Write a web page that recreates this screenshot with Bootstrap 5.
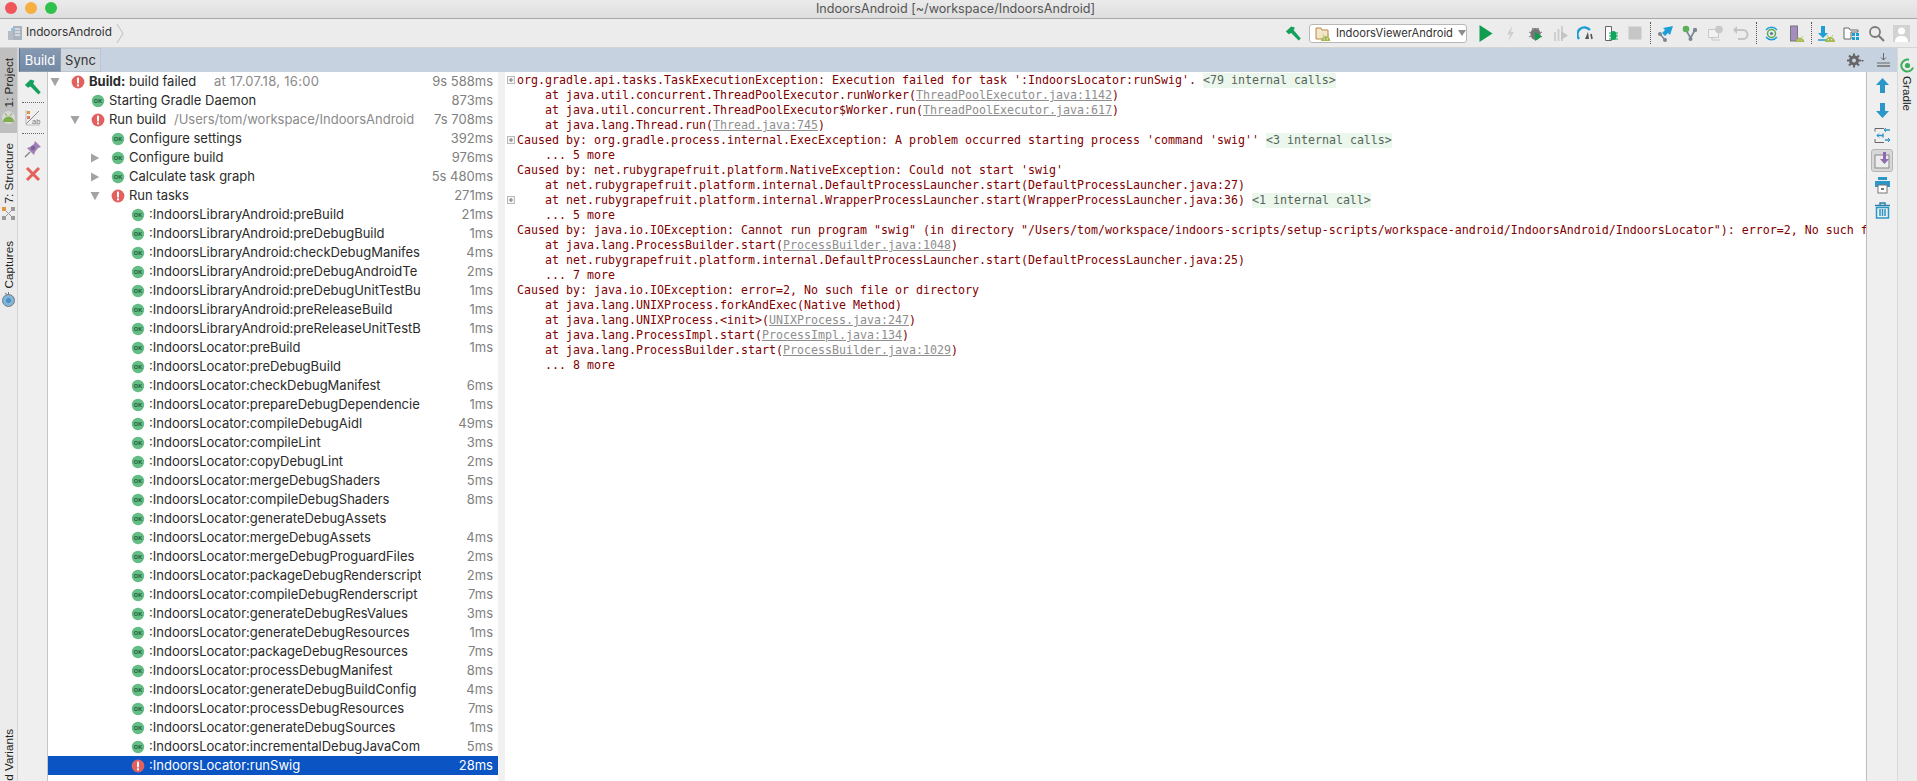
<!DOCTYPE html>
<html lang="en">
<head>
<meta charset="utf-8">
<title>IndoorsAndroid</title>
<link href="https://cdn.jsdelivr.net/npm/bootstrap@5.3.0/dist/css/bootstrap.min.css" rel="stylesheet">
<style>
html,body{height:781px;overflow:hidden;background:#ececec}
body{font-family:Inter,"Liberation Sans",sans-serif;font-size:13px;color:#2b2b2b}
.ide{height:781px;width:1917px}
.titlebar{height:19px;background:linear-gradient(#ebebeb,#dedede);border-bottom:1px solid #a8a8a8;color:#555;font-size:12.6px;line-height:18px;padding-right:6px;flex:none}
.lights{left:5px;top:2px}
.lightdot{width:12px;height:12px;border-radius:50%;display:block}
.toolbar{height:29px;background:#ececec;border-bottom:1px solid #d4d4d4;padding-right:3px}
.crumb{padding-left:7px;gap:2px;font-size:11.8px;color:#333}
.crumb-sep{width:8px;height:21px;margin-left:2px}
.tb{width:25px;height:22px;flex:none}
.tb svg{width:17px;height:17px}
.tb-sep{width:0;height:22px;border-left:1px dotted #555;margin:0 2px 0 2.5px;flex:none}
.combo{width:158px;height:19px;background:#fff;border:1px solid #b8b8b8;border-radius:3px;font-size:11.2px;color:#333;margin:0 5.5px 0 3.5px;padding:0 5px;gap:5px}
.combo svg.fld{width:16px;height:15px;flex:none}
.workspace{min-height:0}
.lstripe{width:18px;background:#ececec;font-family:"Liberation Sans",sans-serif;font-size:11.7px;color:#222;border-right:1px solid #d4d4d4;flex:none}
.rstripe{width:20px;background:#ececec;font-family:"Liberation Sans",sans-serif;font-size:11.7px;color:#222;border-left:1px solid #d8d8d8;flex:none;padding-top:10px}
.vt{writing-mode:vertical-rl;transform:rotate(180deg);line-height:17px;white-space:nowrap}
.vdown{writing-mode:vertical-rl;line-height:17px;white-space:nowrap;margin-top:3px}
.st1{height:85px;background:#bfbfbf;padding-top:10px;gap:3px}
.st2{padding-top:10px;gap:3px}
.st3{padding-top:20px;gap:3px}
.st svg,.rstripe svg{width:15px;height:15px;flex:none}
.st4{margin-top:auto}
.tabstrip{height:24px;background:#c6d2df;padding-left:1px}
.tabx{height:24px;font-size:13px;line-height:23px;text-align:center;border:1px solid #8f9db0;border-width:1px 1px 1px 0}
.tabon{width:42px;background:linear-gradient(#8599b2,#7489a4);color:#fff;border-left:1px solid #5f7186}
.taboff{width:40px;background:#cfd6de;color:#333;border-color:#bcc6d2}
.stripico{width:28px;height:24px}
.stripico svg{width:17px;height:17px}
.panel{min-height:0}
.tools{width:30px;background:#efefef;border-right:1px solid #c4c4c4;padding-top:2px;flex:none}
.tool{width:100%;height:25px}
.tool svg{width:18px;height:18px}
.tooldiv{width:22px;border-top:1px dotted #666;margin:3px 0 2px}
.tree{width:450px;background:#fff;flex:none}
.trow{height:19px;line-height:19px;padding-right:5px;white-space:nowrap}
.l0{padding-left:0}.l1{padding-left:20px}.l2{padding-left:40px}.l3{padding-left:60px}
.arr{width:14px;height:19px;flex:none;margin-right:9px}
.arr svg{width:10px;height:10px}
.sic{width:14px;height:14px;flex:none;margin-right:4px;overflow:visible}
.tname{flex:1 1 auto;min-width:0;overflow:hidden}
.tcut{flex:none;width:272px;overflow:hidden}
.ttime{margin-left:auto;color:#808080;flex:none}
.mut{color:#8a8a8a}
.stamp{margin-left:14px;letter-spacing:.3px}
.rowsel{background:#0a54c4;color:#fff}
.rowsel .ttime{color:#fff}
.gapbar{width:7px;background:#f1f1f1;flex:none}
.console{background:#fff;font-family:"DejaVu Sans Mono","Liberation Mono",monospace;font-size:11.63px;line-height:15px;color:#800000;min-width:0;overflow:hidden;padding-top:1px}
.conline{padding-left:12px;height:15px;white-space:pre}
.fold{display:inline-block;width:12px;margin-left:-12px;vertical-align:top;height:15px}
.fold svg{display:block;width:8px;height:8px;margin:3px 0 0 2px}
.src{color:#8e8e8e;text-decoration:underline}
.hl{background:#ebf6ec;color:#56665a;display:inline-block}
.ricons{width:31px;background:#efefef;border-left:1px solid #bdbdbd;padding-top:2px;flex:none}
.rico{width:22px;height:23px;margin-bottom:2px;border:1px solid transparent}
.rico svg{width:17px;height:17px}
.ricosel{background:#d8d8d8;border-color:#b4b4b4;border-radius:3px}
</style>
</head>
<body>
<svg width="0" height="0" class="d-none" aria-hidden="true">
<defs>
<symbol id="ok" viewBox="0 0 14 14"><circle cx="7" cy="7" r="6.2" fill="#63bd85"/><text x="7" y="9" font-family="Liberation Sans,sans-serif" font-size="5.6" font-weight="700" text-anchor="middle" fill="#1e5c39">OK</text></symbol>
<symbol id="err" viewBox="0 0 14 14"><circle cx="7" cy="7" r="6.4" fill="#e2615f"/><rect x="6" y="2.6" width="2" height="5.800" rx=".6" fill="#fff"/><rect x="6" y="9.4" width="2" height="2" fill="#fff"/></symbol>
<symbol id="dn" viewBox="0 0 10 10"><path d="M.5 1h9L5 9.2z" fill="#a3a3a3"/></symbol>
<symbol id="rt" viewBox="0 0 10 10"><path d="M1 .5v9L9.2 5z" fill="#a3a3a3"/></symbol>
<symbol id="hammer" viewBox="0 0 16 16"><path d="M.8 6.2 5.8 1.4l3.4 1-1 2.6 6.7 7.6-2.1 2.1-7-7.2-2.2 1.2z" fill="#16a05d"/></symbol>
<symbol id="droid" viewBox="0 0 10 8"><path d="M0 8a5 5 0 0 1 10 0z" fill="#a6b84e"/><path d="M2 1 3.300 3M8 1 6.700 3" stroke="#a6b84e" stroke-width=".8"/><circle cx="3.300" cy="5.700" r=".6" fill="#fff"/><circle cx="6.700" cy="5.700" r=".6" fill="#fff"/></symbol>
</defs>
</svg>
<div class="ide d-flex flex-column position-relative">
  <div class="titlebar text-center position-relative">
    <div class="lights position-absolute d-flex gap-2">
      <span class="lightdot" style="background:#f0555a"></span>
      <span class="lightdot" style="background:#f5b03f"></span>
      <span class="lightdot" style="background:#2fc24a"></span>
    </div>
    IndoorsAndroid [~/workspace/IndoorsAndroid]
  </div>
  <div class="toolbar d-flex align-items-center flex-shrink-0">
    <div class="crumb d-flex align-items-center">
      <svg width="17" height="16" viewBox="0 0 17 16"><rect x="1" y="6" width="6" height="9" fill="#b5bcc4"/><rect x="6" y="1" width="9" height="14" fill="#a9b4bf"/><path d="M8 4h5M8 7h5M8 10h5" stroke="#fff"/><rect x="4" y="3" width="3" height="3" fill="#8fc2e0"/></svg>
      <span>IndoorsAndroid</span>
      <svg class="crumb-sep" viewBox="0 0 8 21"><path d="M1 1 7 10.500 1 20" fill="none" stroke="#bdbdbd"/></svg>
    </div>
    <div class="d-flex align-items-center ms-auto">
      <div class="tb d-flex align-items-center justify-content-center"><svg><use href="#hammer"/></svg></div>
      <div class="combo d-flex align-items-center">
        <svg class="fld" viewBox="0 0 16 15"><path d="M1 2h5l1 2h6v9H1z" fill="#f3e6c8" stroke="#b8894a"/><g transform="translate(6 7.500) scale(.95)"><use href="#droid" width="10" height="8"/></g></svg>
        <span class="flex-grow-1 text-nowrap">IndoorsViewerAndroid</span>
        <svg width="8" height="6" viewBox="0 0 8 6" class="flex-shrink-0"><path d="M0 0h8L4 6z" fill="#8c8c8c"/></svg>
      </div>
      <div class="tb d-flex align-items-center justify-content-center"><svg viewBox="0 0 17 17"><path d="M2.500 0v17L15.500 8.500z" fill="#119c50"/></svg></div>
      <div class="tb d-flex align-items-center justify-content-center"><svg viewBox="0 0 17 17"><path d="M10 1 5 9.500h3L6.500 16l5.500-9H9z" fill="#cfcfcf"/></svg></div>
      <div class="tb d-flex align-items-center justify-content-center"><svg viewBox="0 0 17 17"><path d="M5 3l2 1.500h3L12 3M2 7l2 1M15 7l-2 1M2 12l2-1M15 12l-2-1" stroke="#777" fill="none"/><ellipse cx="8.500" cy="9" rx="5" ry="6" fill="#777"/><path d="M8 7v9l7-4.500z" fill="#119c50"/></svg></div>
      <div class="tb d-flex align-items-center justify-content-center"><svg viewBox="0 0 17 17"><path d="M2 7h2v9H2zM5.500 4h2v12h-2zM9 1h2v15H9z" fill="#cfcfcf"/><path d="M9 6v9l7-4.500z" fill="#c4c4c4"/></svg></div>
      <div class="tb d-flex align-items-center justify-content-center"><svg viewBox="0 0 17 17"><path d="M2 14A6.500 6.500 0 0 1 13 5" fill="none" stroke="#1c9fd6" stroke-width="2.400"/><path d="M8 14 11 7l1 7z" fill="#555"/><path d="M14 9l1 5" stroke="#555" stroke-width="1.600"/></svg></div>
      <div class="tb d-flex align-items-center justify-content-center"><svg viewBox="0 0 17 17"><path d="M3.500 1.500h6v14h-6z" fill="#fff" stroke="#666"/><ellipse cx="11.500" cy="10.500" rx="3" ry="4.500" fill="#11a55a"/><path d="M7 8h9M7 11h9M7 14h9" stroke="#11a55a"/></svg></div>
      <div class="tb d-flex align-items-center justify-content-center"><svg viewBox="0 0 17 17"><rect x="1.500" y="1.500" width="13" height="13" fill="#c6c6c6"/></svg></div>
      <div class="tb-sep"></div>
      <div class="tb d-flex align-items-center justify-content-center"><svg viewBox="0 0 17 17"><circle cx="3" cy="9" r="2" fill="#7a8794"/><circle cx="8" cy="15" r="2" fill="#7a8794"/><path d="M3 9l5 6" stroke="#7a8794" stroke-width="1.400"/><path d="M16 1 6 3l2 2-3 3 3 3 3-3 2 2z" fill="#1c9fd6"/></svg></div>
      <div class="tb d-flex align-items-center justify-content-center"><svg viewBox="0 0 17 17"><path d="M4 5l4.500 8L13 5" fill="none" stroke="#7a8794" stroke-width="1.600"/><circle cx="4" cy="4" r="3.300" fill="#5cae5c"/><circle cx="13" cy="5" r="2.200" fill="#7a8794"/><circle cx="8.500" cy="14" r="2" fill="#7a8794"/></svg></div>
      <div class="tb d-flex align-items-center justify-content-center"><svg viewBox="0 0 17 17"><path d="M1.500 4.500h10v8h-10z" fill="#f2f2f2" stroke="#c8c8c8"/><path d="M5 12v3h8" fill="none" stroke="#c8c8c8"/><circle cx="12" cy="4.500" r="3.800" fill="#c8c8c8"/></svg></div>
      <div class="tb d-flex align-items-center justify-content-center"><svg viewBox="0 0 17 17"><path d="M2 5h9a4 4 0 0 1 0 9H6" fill="none" stroke="#c4c4c4" stroke-width="2"/><path d="M5 1 1 5l4 4z" fill="#c4c4c4"/></svg></div>
      <div class="tb-sep"></div>
      <div class="tb d-flex align-items-center justify-content-center"><svg viewBox="0 0 17 17"><path d="M3 5a7 7 0 0 1 11 0M3 12a7 7 0 0 0 11 0" fill="none" stroke="#1c9fd6" stroke-width="1.500"/><circle cx="8.500" cy="8.500" r="4" fill="none" stroke="#5aa84f" stroke-width="1.500"/><circle cx="8.500" cy="8.500" r="1.600" fill="#5a7f9a"/></svg></div>
      <div class="tb d-flex align-items-center justify-content-center"><svg viewBox="0 0 17 17"><rect x="2.500" y="1" width="7" height="15" fill="#a58cc0" stroke="#777"/><use href="#droid" x="7" y="10" width="10" height="7"/></svg></div>
      <div class="tb-sep"></div>
      <div class="tb d-flex align-items-center justify-content-center"><svg viewBox="0 0 17 17"><path d="M3 1h4v7h3l-5 5-5-5h3z" fill="#1c9fd6"/><path d="M0 15h9" stroke="#1c9fd6" stroke-width="1.500"/><use href="#droid" x="7" y="9" width="10" height="8"/></svg></div>
      <div class="tb d-flex align-items-center justify-content-center"><svg viewBox="0 0 17 17"><path d="M1 3h5l1 2h8v2H8v7H1z" fill="#fff" stroke="#666"/><rect x="9" y="8" width="3" height="3" fill="#1c9fd6"/><rect x="13" y="8" width="3" height="3" fill="#1c9fd6"/><rect x="9" y="12" width="3" height="3" fill="#1c9fd6"/><rect x="13" y="12" width="3" height="3" fill="#1c9fd6"/></svg></div>
      <div class="tb d-flex align-items-center justify-content-center"><svg viewBox="0 0 17 17"><circle cx="7" cy="7" r="5" fill="none" stroke="#7d7d7d" stroke-width="1.800"/><path d="M10.500 10.500 16 16" stroke="#7d7d7d" stroke-width="2.200"/></svg></div>
      <div class="tb d-flex align-items-center justify-content-center"><svg viewBox="0 0 17 17"><rect width="17" height="17" fill="#d2d2d2"/><circle cx="8.500" cy="6" r="3.500" fill="#fff"/><path d="M2 17c0-5 3-6 6.500-6s6.500 1 6.500 6z" fill="#fff"/></svg></div>
    </div>
  </div>
  <div class="workspace d-flex flex-grow-1">
    <div class="lstripe d-flex flex-column">
      <div class="st st1 d-flex flex-column align-items-center">
        <span class="vt">1: Project</span>
        <svg viewBox="0 0 15 15"><circle cx="7.500" cy="7.500" r="6.500" fill="#d8d8d8"/><path d="M2 12a5.500 5.500 0 0 1 11 0z" fill="#7fae4e"/><path d="M4 3l2 3M11 3 9 6" stroke="#7fae4e"/></svg>
      </div>
      <div class="st st2 d-flex flex-column align-items-center">
        <span class="vt">7: Structure</span>
        <svg viewBox="0 0 15 15"><rect x="1" y="1" width="4" height="4" fill="#e0963f"/><rect x="10" y="1" width="4" height="4" fill="#9a9a9a"/><rect x="1" y="10" width="4" height="4" fill="#9a9a9a"/><rect x="10" y="10" width="4" height="4" fill="#9a9a9a"/><path d="M5 5l5 5M10 5l-5 5" stroke="#9a9a9a"/></svg>
      </div>
      <div class="st st3 d-flex flex-column align-items-center">
        <span class="vt">Captures</span>
        <svg viewBox="0 0 15 15"><circle cx="7.500" cy="8.500" r="6" fill="#7fb6dc" stroke="#777"/><path d="M7.500 2.500V0M4 1l2 1.500" stroke="#777"/><circle cx="7.500" cy="8.500" r="2.500" fill="#4d8fc0"/></svg>
      </div>
      <div class="st4 d-flex justify-content-center"><span class="vt">d Variants</span></div>
    </div>
    <div class="d-flex flex-column flex-grow-1" style="min-width:0">
      <div class="tabstrip d-flex flex-shrink-0">
        <div class="tabx tabon">Build</div>
        <div class="tabx taboff">Sync</div>
        <div class="stripico d-flex align-items-center justify-content-center ms-auto"><svg viewBox="0 0 17 17"><circle cx="7" cy="8.500" r="3.500" fill="none" stroke="#666" stroke-width="3"/><path d="M7 1.500v3M7 12.500v3M0 8.500h3M11 8.500h3M2 3.500l2 2M12 3.500l-2 2M2 13.500l2-2M12 13.500l-2-2" stroke="#666" stroke-width="2"/><path d="M14 8h3l-1.500 2z" fill="#666"/></svg></div>
        <div class="stripico d-flex align-items-center justify-content-center"><svg viewBox="0 0 17 17"><path d="M8.500 1v7M6 5.500 8.500 8 11 5.500" fill="none" stroke="#666"/><path d="M2 11h13" stroke="#666"/><rect x="2" y="13" width="13" height="2" fill="#888"/></svg></div>
      </div>
      <div class="panel d-flex flex-grow-1">
        <div class="tools d-flex flex-column align-items-center">
          <div class="tool d-flex align-items-center justify-content-center"><svg><use href="#hammer"/></svg></div>
          <div class="tooldiv"></div>
          <div class="tool d-flex align-items-center justify-content-center"><svg viewBox="0 0 18 18"><rect x="3" y="2" width="3" height="3" fill="#e0963f"/><rect x="3" y="7" width="3" height="3" fill="#d97a6a"/><path d="M2 15 15 2" stroke="#888"/><path d="M2 1v15h14" fill="none" stroke="#bbb"/><text x="8" y="15" font-family="Liberation Sans,sans-serif" font-size="7.500" fill="#777">ab</text></svg></div>
          <div class="tooldiv"></div>
          <div class="tool d-flex align-items-center justify-content-center"><svg viewBox="0 0 18 18"><path d="M1 17l5-5" stroke="#888" stroke-width="1.400"/><path d="M11 1l6 6-3 1-3 4-1 3-7-7 3-1 4-3z" fill="#a080b8"/><circle cx="9" cy="8" r="2.200" fill="#7b6290"/></svg></div>
          <div class="tool d-flex align-items-center justify-content-center"><svg viewBox="0 0 18 18"><path d="M3 3l12 12M15 3 3 15" stroke="#e4625c" stroke-width="3"/></svg></div>
        </div>
        <div class="tree">
          <div class="trow l0 d-flex align-items-center"><span class="arr d-flex align-items-center justify-content-center"><svg><use href="#dn"/></svg></span><svg class="sic"><use href="#err"/></svg><span class="tname"><b>Build:</b> build failed <span class="mut stamp">at 17.07.18, 16:00</span></span><span class="ttime">9s 588ms</span></div>
          <div class="trow l1 d-flex align-items-center"><span class="arr"></span><svg class="sic"><use href="#ok"/></svg><span class="tname">Starting Gradle Daemon</span><span class="ttime">873ms</span></div>
          <div class="trow l1 d-flex align-items-center"><span class="arr d-flex align-items-center justify-content-center"><svg><use href="#dn"/></svg></span><svg class="sic"><use href="#err"/></svg><span class="tname">Run build <span class="mut ms-1">/Users/tom/workspace/IndoorsAndroid</span></span><span class="ttime">7s 708ms</span></div>
          <div class="trow l2 d-flex align-items-center"><span class="arr"></span><svg class="sic"><use href="#ok"/></svg><span class="tname">Configure settings</span><span class="ttime">392ms</span></div>
          <div class="trow l2 d-flex align-items-center"><span class="arr d-flex align-items-center justify-content-center"><svg><use href="#rt"/></svg></span><svg class="sic"><use href="#ok"/></svg><span class="tname">Configure build</span><span class="ttime">976ms</span></div>
          <div class="trow l2 d-flex align-items-center"><span class="arr d-flex align-items-center justify-content-center"><svg><use href="#rt"/></svg></span><svg class="sic"><use href="#ok"/></svg><span class="tname">Calculate task graph</span><span class="ttime">5s 480ms</span></div>
          <div class="trow l2 d-flex align-items-center"><span class="arr d-flex align-items-center justify-content-center"><svg><use href="#dn"/></svg></span><svg class="sic"><use href="#err"/></svg><span class="tname">Run tasks</span><span class="ttime">271ms</span></div>
          <div class="trow l3 d-flex align-items-center"><span class="arr"></span><svg class="sic"><use href="#ok"/></svg><span class="tcut">:IndoorsLibraryAndroid:preBuild</span><span class="ttime">21ms</span></div>
          <div class="trow l3 d-flex align-items-center"><span class="arr"></span><svg class="sic"><use href="#ok"/></svg><span class="tcut">:IndoorsLibraryAndroid:preDebugBuild</span><span class="ttime">1ms</span></div>
          <div class="trow l3 d-flex align-items-center"><span class="arr"></span><svg class="sic"><use href="#ok"/></svg><span class="tcut">:IndoorsLibraryAndroid:checkDebugManifes</span><span class="ttime">4ms</span></div>
          <div class="trow l3 d-flex align-items-center"><span class="arr"></span><svg class="sic"><use href="#ok"/></svg><span class="tcut">:IndoorsLibraryAndroid:preDebugAndroidTe</span><span class="ttime">2ms</span></div>
          <div class="trow l3 d-flex align-items-center"><span class="arr"></span><svg class="sic"><use href="#ok"/></svg><span class="tcut">:IndoorsLibraryAndroid:preDebugUnitTestBu</span><span class="ttime">1ms</span></div>
          <div class="trow l3 d-flex align-items-center"><span class="arr"></span><svg class="sic"><use href="#ok"/></svg><span class="tcut">:IndoorsLibraryAndroid:preReleaseBuild</span><span class="ttime">1ms</span></div>
          <div class="trow l3 d-flex align-items-center"><span class="arr"></span><svg class="sic"><use href="#ok"/></svg><span class="tcut">:IndoorsLibraryAndroid:preReleaseUnitTestB</span><span class="ttime">1ms</span></div>
          <div class="trow l3 d-flex align-items-center"><span class="arr"></span><svg class="sic"><use href="#ok"/></svg><span class="tcut">:IndoorsLocator:preBuild</span><span class="ttime">1ms</span></div>
          <div class="trow l3 d-flex align-items-center"><span class="arr"></span><svg class="sic"><use href="#ok"/></svg><span class="tcut">:IndoorsLocator:preDebugBuild</span><span class="ttime"></span></div>
          <div class="trow l3 d-flex align-items-center"><span class="arr"></span><svg class="sic"><use href="#ok"/></svg><span class="tcut">:IndoorsLocator:checkDebugManifest</span><span class="ttime">6ms</span></div>
          <div class="trow l3 d-flex align-items-center"><span class="arr"></span><svg class="sic"><use href="#ok"/></svg><span class="tcut">:IndoorsLocator:prepareDebugDependencie</span><span class="ttime">1ms</span></div>
          <div class="trow l3 d-flex align-items-center"><span class="arr"></span><svg class="sic"><use href="#ok"/></svg><span class="tcut">:IndoorsLocator:compileDebugAidl</span><span class="ttime">49ms</span></div>
          <div class="trow l3 d-flex align-items-center"><span class="arr"></span><svg class="sic"><use href="#ok"/></svg><span class="tcut">:IndoorsLocator:compileLint</span><span class="ttime">3ms</span></div>
          <div class="trow l3 d-flex align-items-center"><span class="arr"></span><svg class="sic"><use href="#ok"/></svg><span class="tcut">:IndoorsLocator:copyDebugLint</span><span class="ttime">2ms</span></div>
          <div class="trow l3 d-flex align-items-center"><span class="arr"></span><svg class="sic"><use href="#ok"/></svg><span class="tcut">:IndoorsLocator:mergeDebugShaders</span><span class="ttime">5ms</span></div>
          <div class="trow l3 d-flex align-items-center"><span class="arr"></span><svg class="sic"><use href="#ok"/></svg><span class="tcut">:IndoorsLocator:compileDebugShaders</span><span class="ttime">8ms</span></div>
          <div class="trow l3 d-flex align-items-center"><span class="arr"></span><svg class="sic"><use href="#ok"/></svg><span class="tcut">:IndoorsLocator:generateDebugAssets</span><span class="ttime"></span></div>
          <div class="trow l3 d-flex align-items-center"><span class="arr"></span><svg class="sic"><use href="#ok"/></svg><span class="tcut">:IndoorsLocator:mergeDebugAssets</span><span class="ttime">4ms</span></div>
          <div class="trow l3 d-flex align-items-center"><span class="arr"></span><svg class="sic"><use href="#ok"/></svg><span class="tcut">:IndoorsLocator:mergeDebugProguardFiles</span><span class="ttime">2ms</span></div>
          <div class="trow l3 d-flex align-items-center"><span class="arr"></span><svg class="sic"><use href="#ok"/></svg><span class="tcut">:IndoorsLocator:packageDebugRenderscript</span><span class="ttime">2ms</span></div>
          <div class="trow l3 d-flex align-items-center"><span class="arr"></span><svg class="sic"><use href="#ok"/></svg><span class="tcut">:IndoorsLocator:compileDebugRenderscript</span><span class="ttime">7ms</span></div>
          <div class="trow l3 d-flex align-items-center"><span class="arr"></span><svg class="sic"><use href="#ok"/></svg><span class="tcut">:IndoorsLocator:generateDebugResValues</span><span class="ttime">3ms</span></div>
          <div class="trow l3 d-flex align-items-center"><span class="arr"></span><svg class="sic"><use href="#ok"/></svg><span class="tcut">:IndoorsLocator:generateDebugResources</span><span class="ttime">1ms</span></div>
          <div class="trow l3 d-flex align-items-center"><span class="arr"></span><svg class="sic"><use href="#ok"/></svg><span class="tcut">:IndoorsLocator:packageDebugResources</span><span class="ttime">7ms</span></div>
          <div class="trow l3 d-flex align-items-center"><span class="arr"></span><svg class="sic"><use href="#ok"/></svg><span class="tcut">:IndoorsLocator:processDebugManifest</span><span class="ttime">8ms</span></div>
          <div class="trow l3 d-flex align-items-center"><span class="arr"></span><svg class="sic"><use href="#ok"/></svg><span class="tcut">:IndoorsLocator:generateDebugBuildConfig</span><span class="ttime">4ms</span></div>
          <div class="trow l3 d-flex align-items-center"><span class="arr"></span><svg class="sic"><use href="#ok"/></svg><span class="tcut">:IndoorsLocator:processDebugResources</span><span class="ttime">7ms</span></div>
          <div class="trow l3 d-flex align-items-center"><span class="arr"></span><svg class="sic"><use href="#ok"/></svg><span class="tcut">:IndoorsLocator:generateDebugSources</span><span class="ttime">1ms</span></div>
          <div class="trow l3 d-flex align-items-center"><span class="arr"></span><svg class="sic"><use href="#ok"/></svg><span class="tcut">:IndoorsLocator:incrementalDebugJavaCom</span><span class="ttime">5ms</span></div>
          <div class="trow l3 rowsel d-flex align-items-center"><span class="arr"></span><svg class="sic"><use href="#err"/></svg><span class="tcut">:IndoorsLocator:runSwig</span><span class="ttime">28ms</span></div>
        </div>
        <div class="gapbar"></div>
        <div class="console flex-grow-1">
<div class="conline"><span class="fold"><svg viewBox="0 0 8 8"><rect x=".5" y=".5" width="7" height="7" fill="#f4f4f4" stroke="#bbb"/><path d="M2 4h4M4 2v4" stroke="#777"/></svg></span>org.gradle.api.tasks.TaskExecutionException: Execution failed for task ':IndoorsLocator:runSwig'. <span class="hl">&lt;79 internal calls&gt;</span></div>
<div class="conline">    at java.util.concurrent.ThreadPoolExecutor.runWorker(<a class="src" href="#">ThreadPoolExecutor.java:1142</a>)</div>
<div class="conline">    at java.util.concurrent.ThreadPoolExecutor$Worker.run(<a class="src" href="#">ThreadPoolExecutor.java:617</a>)</div>
<div class="conline">    at java.lang.Thread.run(<a class="src" href="#">Thread.java:745</a>)</div>
<div class="conline"><span class="fold"><svg viewBox="0 0 8 8"><rect x=".5" y=".5" width="7" height="7" fill="#f4f4f4" stroke="#bbb"/><path d="M2 4h4M4 2v4" stroke="#777"/></svg></span>Caused by: org.gradle.process.internal.ExecException: A problem occurred starting process 'command 'swig'' <span class="hl">&lt;3 internal calls&gt;</span></div>
<div class="conline">    ... 5 more</div>
<div class="conline">Caused by: net.rubygrapefruit.platform.NativeException: Could not start 'swig'</div>
<div class="conline">    at net.rubygrapefruit.platform.internal.DefaultProcessLauncher.start(DefaultProcessLauncher.java:27)</div>
<div class="conline"><span class="fold"><svg viewBox="0 0 8 8"><rect x=".5" y=".5" width="7" height="7" fill="#f4f4f4" stroke="#bbb"/><path d="M2 4h4M4 2v4" stroke="#777"/></svg></span>    at net.rubygrapefruit.platform.internal.WrapperProcessLauncher.start(WrapperProcessLauncher.java:36) <span class="hl">&lt;1 internal call&gt;</span></div>
<div class="conline">    ... 5 more</div>
<div class="conline">Caused by: java.io.IOException: Cannot run program "swig" (in directory "/Users/tom/workspace/indoors-scripts/setup-scripts/workspace-android/IndoorsAndroid/IndoorsLocator"): error=2, No such f</div>
<div class="conline">    at java.lang.ProcessBuilder.start(<a class="src" href="#">ProcessBuilder.java:1048</a>)</div>
<div class="conline">    at net.rubygrapefruit.platform.internal.DefaultProcessLauncher.start(DefaultProcessLauncher.java:25)</div>
<div class="conline">    ... 7 more</div>
<div class="conline">Caused by: java.io.IOException: error=2, No such file or directory</div>
<div class="conline">    at java.lang.UNIXProcess.forkAndExec(Native Method)</div>
<div class="conline">    at java.lang.UNIXProcess.&lt;init&gt;(<a class="src" href="#">UNIXProcess.java:247</a>)</div>
<div class="conline">    at java.lang.ProcessImpl.start(<a class="src" href="#">ProcessImpl.java:134</a>)</div>
<div class="conline">    at java.lang.ProcessBuilder.start(<a class="src" href="#">ProcessBuilder.java:1029</a>)</div>
<div class="conline">    ... 8 more</div>
        </div>
        <div class="ricons d-flex flex-column align-items-center">
          <div class="rico d-flex align-items-center justify-content-center"><svg viewBox="0 0 17 17"><path d="M8.500 1 15 8h-4v8H6V8H2z" fill="#2b96c8"/></svg></div>
          <div class="rico d-flex align-items-center justify-content-center"><svg viewBox="0 0 17 17"><path d="M8.500 16 15 9h-4V1H6v8H2z" fill="#2b96c8"/></svg></div>
          <div class="rico d-flex align-items-center justify-content-center"><svg viewBox="0 0 17 17"><path d="M1 1.500h9M1 15.500h9M1 1.500v3M1 12v3.500" stroke="#666" fill="none"/><path d="M3 8.500h6M9 6.500v4M16 3H11M16 13h-5" stroke="#2b96c8" stroke-width="1.400" fill="none"/><path d="M12 1l-2 2 2 2M14 11l2 2-2 2M5 6.500 3 8.500l2 2" stroke="#2b96c8" fill="none"/></svg></div>
          <div class="rico ricosel d-flex align-items-center justify-content-center"><svg viewBox="0 0 17 17"><rect x="1" y="3" width="14" height="13" fill="#ececec" stroke="#888"/><path d="M9 0h3v7h3l-4.500 5L6 7h3z" fill="#8e6bb0"/></svg></div>
          <div class="rico d-flex align-items-center justify-content-center"><svg viewBox="0 0 17 17"><rect x="4" y="0" width="9" height="3" fill="#2b96c8"/><rect x="1" y="4" width="15" height="6" fill="#2b96c8"/><rect x="4" y="8" width="9" height="8" fill="#fff" stroke="#777"/><rect x="7" y="11" width="3" height="2" fill="#777"/></svg></div>
          <div class="rico d-flex align-items-center justify-content-center"><svg viewBox="0 0 17 17"><path d="M1 3.500h15M6 3V1h5v2" fill="none" stroke="#2b7fa8" stroke-width="1.400"/><path d="M2.500 5.500h12V16h-12z" fill="none" stroke="#2b96c8" stroke-width="1.500"/><path d="M6 7v7M8.500 7v7M11 7v7" stroke="#2b96c8" stroke-width="1.500"/></svg></div>
        </div>
      </div>
    </div>
    <div class="rstripe d-flex flex-column align-items-center">
      <svg viewBox="0 0 15 15"><path d="M13 9.500A6 6 0 1 1 9 1.800" fill="none" stroke="#3aae5a" stroke-width="2"/><circle cx="7.500" cy="7.500" r="2.600" fill="#3aae5a"/></svg>
      <span class="vdown">Gradle</span>
    </div>
  </div>
</div>
</body>
</html>
